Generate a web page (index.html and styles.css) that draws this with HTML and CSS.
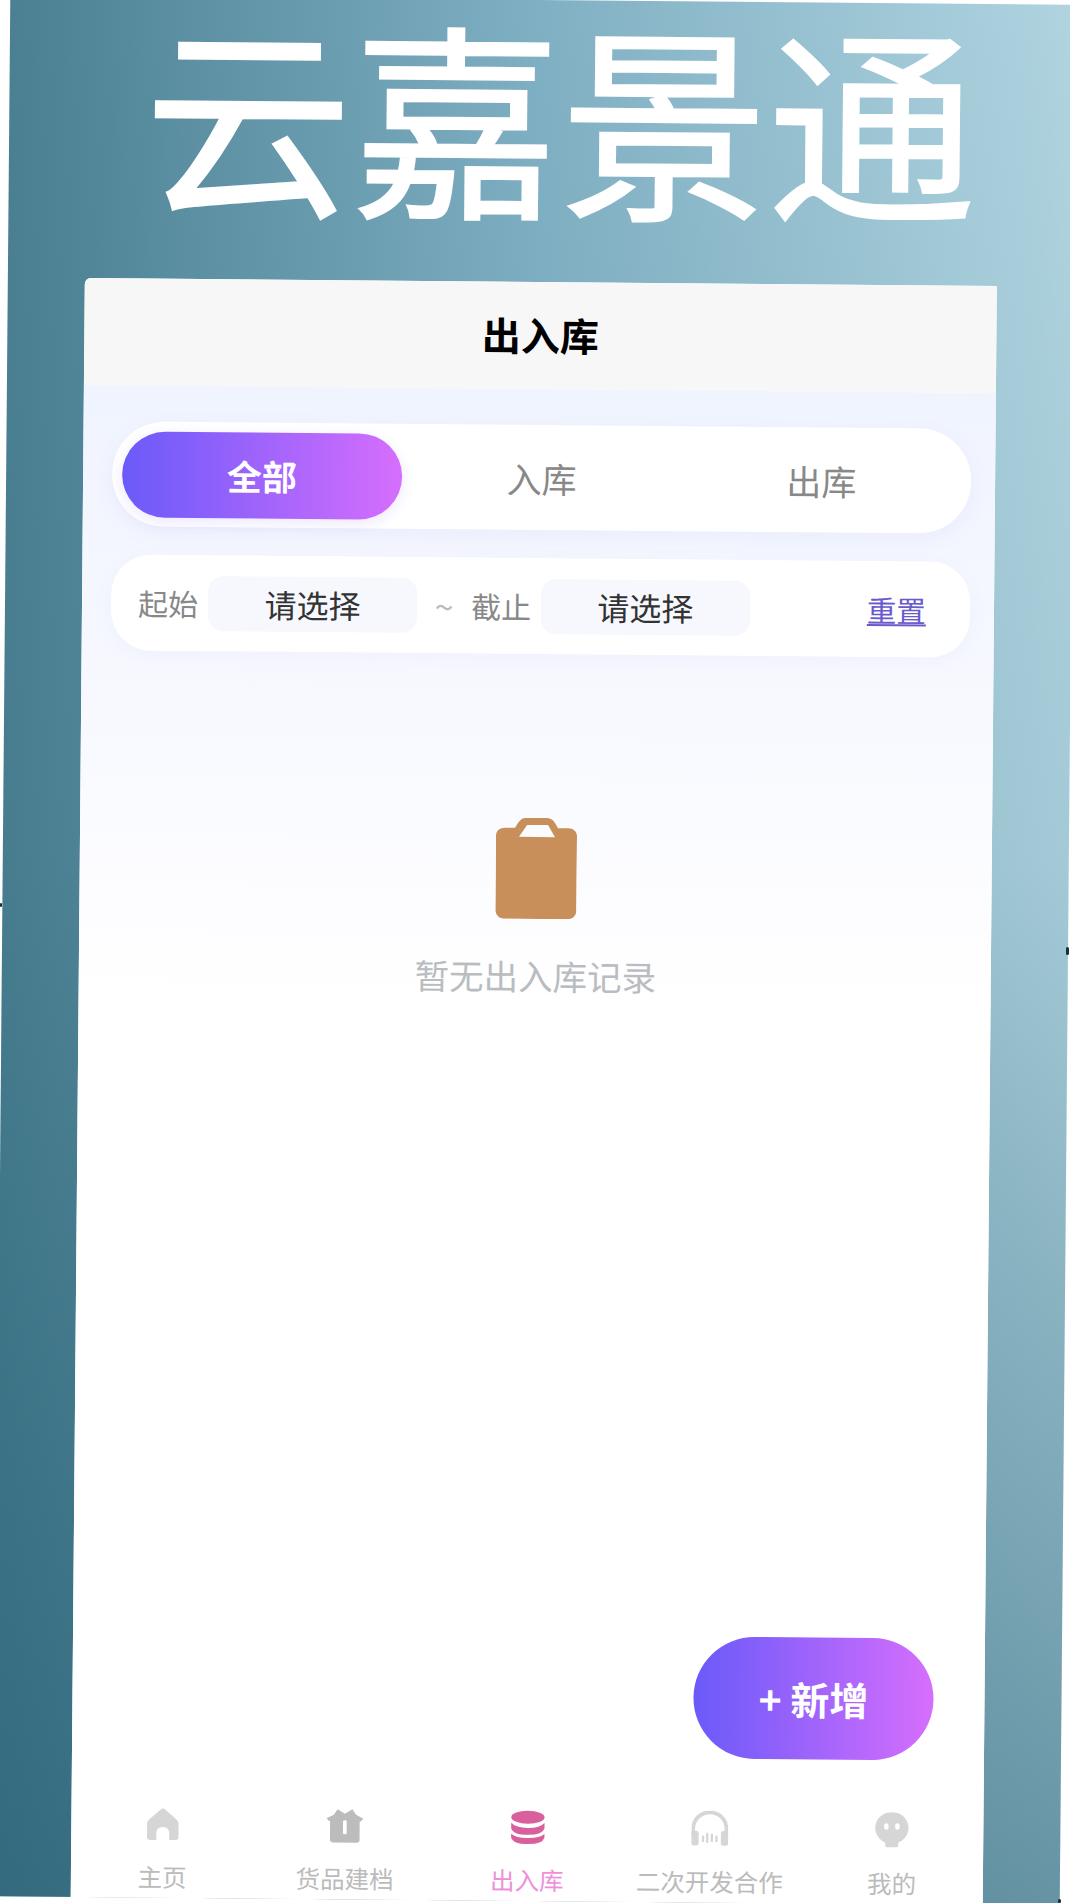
FILE: index.html
```html
<!DOCTYPE html>
<html lang="zh">
<head>
<meta charset="utf-8">
<title>出入库</title>
<link rel="stylesheet" href="styles.css">
</head>
<body>
<div class="stage">
  <div class="brand"><h1 class="brand-name">云嘉景通</h1></div>
  <main class="panel">
    <header class="panel-head">出入库</header>
    <div class="panel-body">
      <div class="tabs">
        <div class="tab tab-active">全部</div>
        <div class="tab">入库</div>
        <div class="tab">出库</div>
      </div>
      <div class="filter">
        <span class="filter-label">起始</span>
        <div class="picker">请选择</div>
        <span class="tilde">~</span>
        <span class="filter-label">截止</span>
        <div class="picker">请选择</div>
        <a class="reset">重置</a>
      </div>
      <div class="empty">
        <svg class="empty-icon" viewBox="0 0 81 101"><path fill="#c98f5a" fill-rule="evenodd" d="M30 0H51C55 0 57 2 59 5L62 10H72C77 10 81 13 81 18V92C81 97 78 101 72 101H9C4 101 0 97 0 92V18C0 13 4 10 9 10H19L22 5C24 2 26 0 30 0ZM23 19H59L52 7H31Z"/></svg>
        <p class="empty-text">暂无出入库记录</p>
      </div>
      <button class="fab">+ 新增</button>
    </div>
    <nav class="tabbar">
      <div class="tabbar-item">
        <svg class="tabbar-icon" viewBox="0 0 40 40"><path fill="#d6d6d6" d="M20 3Q21.500 3 23 4.500L35 15Q37 17 37 19V34Q37 37 34 37H27V30Q27 23 20 23Q13 23 13 30V37H6Q3 37 3 34V19Q3 17 5 15L17 4.500Q18.500 3 20 3Z"/></svg>
        <span class="tabbar-label">主页</span>
      </div>
      <div class="tabbar-item">
        <svg class="tabbar-icon" viewBox="0 0 40 40"><path fill="#bcbcbc" fill-rule="evenodd" d="M0 12L8 8L12 2L20 7L28 2L32 8L40 12L37 15H36V35Q36 38 33 38H7Q4 38 4 35V15H3ZM18 15Q18 14 20 14Q22 14 22 15V28Q22 29 20 29Q18 29 18 28Z"/></svg>
        <span class="tabbar-label">货品建档</span>
      </div>
      <div class="tabbar-item tabbar-active">
        <svg class="tabbar-icon" viewBox="0 0 40 40"><g fill="#d9609c"><ellipse cx="20" cy="9" rx="18" ry="7"/><path d="M2 15Q7 20.500 20 20.500Q33 20.500 38 15V21Q36 28 20 28Q4 28 2 21Z"/><path d="M2 27Q7 31.500 20 31.500Q33 31.500 38 27V31Q36 38 20 38Q4 38 2 31Z"/></g></svg>
        <span class="tabbar-label">出入库</span>
      </div>
      <div class="tabbar-item">
        <svg class="tabbar-icon" viewBox="0 0 40 40"><g fill="#d6d6d6"><path d="M0 28V20C0 8 9 0 20 0C31 0 40 8 40 20V28H36V20C36 11 29 4 20 4C11 4 4 11 4 20V28Z"/><rect x="0" y="22" width="8" height="16" rx="3"/><rect x="32" y="22" width="8" height="16" rx="3"/><rect x="11.500" y="27" width="2.500" height="7" rx="1"/><rect x="16" y="24" width="2.500" height="11" rx="1"/><rect x="21" y="25" width="2.500" height="9" rx="1"/><rect x="26" y="27" width="2.500" height="7" rx="1"/></g></svg>
        <span class="tabbar-label">二次开发合作</span>
      </div>
      <div class="tabbar-item">
        <svg class="tabbar-icon" viewBox="0 0 40 40"><path fill="#d6d6d6" fill-rule="evenodd" d="M20 0C31 0 38 8 38 17C38 25 32 31 27 33V36Q27 38 25 38H15Q13 38 13 36V33C8 31 2 25 2 17C2 8 9 0 20 0ZM14 12Q11.500 12 11.500 15.500Q11.500 19 14 19Q16.500 19 16.500 15.500Q16.500 12 14 12ZM26 12Q23.500 12 23.500 15.500Q23.500 19 26 19Q28.500 19 28.500 15.500Q28.500 12 26 12Z"/></svg>
        <span class="tabbar-label">我的</span>
      </div>
    </nav>
  </main>
</div>
<span class="speck speck-left"></span>
<span class="speck speck-right"></span>
<span class="speck speck-bottom"></span>
</body>
</html>
```
FILE: styles.css
```css
html, body {
  margin: 0;
  height: 1903px;
  overflow: hidden;
  background: #fff;
}
body {
  position: relative;
  font-family: "Noto Sans CJK SC", "Noto Sans", sans-serif;
}
.stage {
  box-sizing: border-box;
  width: 1066px;
  height: 1901px;
  margin-left: 2px;
  display: flex;
  flex-direction: column;
  align-items: center;
  transform: rotate(0.5deg);
  background:
    linear-gradient(180deg, rgba(28, 84, 104, 0) 0%, rgba(28, 84, 104, 0.08) 45%, rgba(28, 84, 104, 0.5) 100%),
    linear-gradient(90deg, #4a8092 0%, #80b0c3 50%, #b0d4e0 100%);
}
.brand {
  height: 282px;
  flex: none;
  padding-left: 36px;
  display: flex;
  justify-content: center;
}
.brand-name {
  margin: 0;
  font-size: 208px;
  line-height: 228px;
  font-weight: 400;
  color: #fff;
  -webkit-text-stroke: 2px #fff;
  white-space: nowrap;
}
.panel {
  width: 912px;
  flex: 1;
  min-height: 0;
  display: flex;
  flex-direction: column;
  background: #fff;
  border-top-left-radius: 6px;
}
.panel-head {
  height: 107px;
  flex: none;
  box-sizing: border-box;
  padding-bottom: 3px;
  display: flex;
  align-items: center;
  justify-content: center;
  background: #f7f7f7;
  border-top-left-radius: 6px;
  font-size: 39px;
  font-weight: 700;
  color: #000;
}
.panel-body {
  position: relative;
  flex: 1;
  min-height: 0;
  box-sizing: border-box;
  padding: 36px 24px 0 29px;
  display: flex;
  flex-direction: column;
  background: linear-gradient(180deg, #f0f4fe 0px, #f8f9ff 330px, #ffffff 620px);
}
.tabs {
  height: 105px;
  flex: none;
  box-sizing: border-box;
  padding: 10px;
  display: flex;
  background: #fff;
  border-radius: 52px;
  box-shadow: 0 6px 20px rgba(110, 110, 220, 0.07);
}
.tab {
  flex: 1;
  height: 86px;
  box-sizing: border-box;
  padding-bottom: 2px;
  display: flex;
  align-items: center;
  justify-content: center;
  border-radius: 43px;
  font-size: 35px;
  color: #888;
}
.tab-active {
  font-weight: 700;
  color: #fff;
  background: linear-gradient(90deg, #6a5af9, #d66efd);
  box-shadow: 0 4px 14px rgba(110, 90, 250, 0.14);
}
.filter {
  height: 96px;
  flex: none;
  box-sizing: border-box;
  margin-top: 28px;
  padding: 0 44px 0 27px;
  display: flex;
  align-items: center;
  background: #fff;
  border-radius: 40px;
  box-shadow: 0 6px 20px rgba(110, 110, 220, 0.05);
}
.filter-label {
  width: 60px;
  flex: none;
  font-size: 30px;
  color: #888;
}
.picker {
  width: 209px;
  height: 55px;
  flex: none;
  margin-left: 10px;
  display: flex;
  align-items: center;
  justify-content: center;
  border-radius: 15px;
  background: #f7f8fd;
  font-size: 32px;
  color: #333;
}
.tilde {
  width: 54px;
  flex: none;
  text-align: center;
  font-size: 34px;
  color: #bbb;
}
.reset {
  margin-left: auto;
  font-size: 29.5px;
  color: #6a5acd;
  text-decoration: underline;
}
.empty {
  margin-top: 164px;
  margin-right: 4px;
  display: flex;
  flex-direction: column;
  align-items: center;
}
.empty-icon {
  width: 81px;
  height: 101px;
}
.empty-text {
  margin: 34px 0 0;
  font-size: 34.5px;
  line-height: 44px;
  color: #b9bcc0;
}
.fab {
  position: absolute;
  right: 51px;
  bottom: 22px;
  width: 240px;
  height: 122px;
  border: 0;
  border-radius: 61px;
  background: linear-gradient(90deg, #6a5af9, #d66efd);
  font-family: inherit;
  font-size: 39px;
  font-weight: 700;
  color: #fff;
}
.tabbar {
  height: 122px;
  flex: none;
  display: flex;
  background: #fff;
}
.tabbar-item {
  flex: 1;
  display: flex;
  flex-direction: column;
  align-items: center;
  padding-top: 30px;
}
.tabbar-icon {
  width: 37px;
  height: 37px;
}
.tabbar-label {
  margin-top: 18px;
  font-size: 24.5px;
  line-height: 32px;
  color: #bbb;
  white-space: nowrap;
}
.tabbar-active .tabbar-label {
  color: #f08fd8;
}
.speck {
  position: absolute;
  background: #14303c;
  border-radius: 2px;
}
.speck-left {
  left: 0;
  top: 903px;
  width: 2px;
  height: 4px;
}
.speck-right {
  left: 1066px;
  top: 947px;
  width: 3px;
  height: 8px;
}
.speck-bottom {
  left: 1058px;
  top: 1899px;
  width: 3px;
  height: 4px;
}
```
